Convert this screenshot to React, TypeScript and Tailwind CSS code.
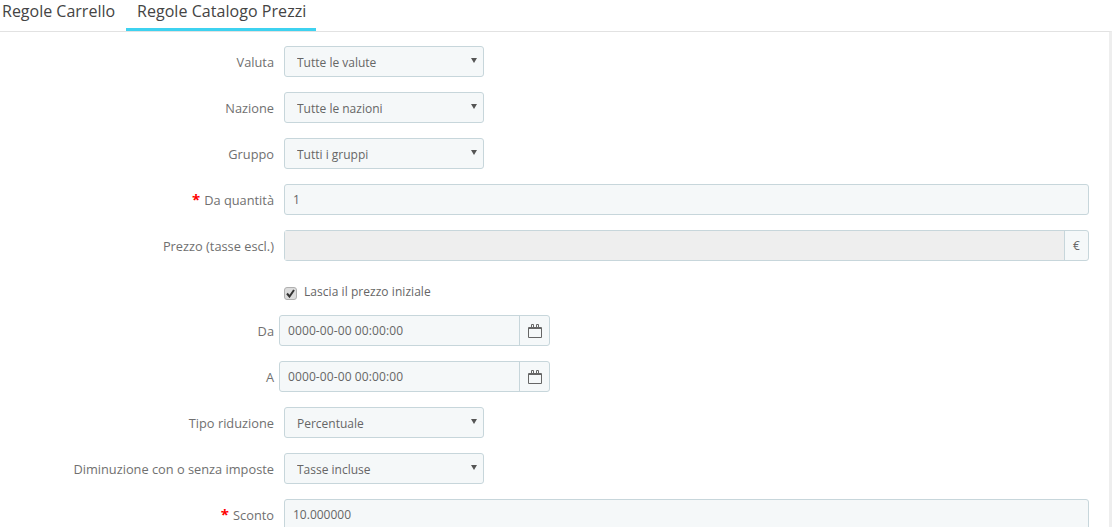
import type { ReactNode } from 'react'

const font = { fontFamily: '"Open Sans", sans-serif' }

function Label({ children, required, width = 'w-[274px]' }: { children: ReactNode; required?: boolean; width?: string }) {
  return (
    <label className={`${width} shrink-0 pt-[2px] text-right text-[12.8px] text-[#707070]`}>
      {required ? <span className="mr-[4px] text-[15px] font-bold leading-[12px] text-[#f00]">*</span> : null}
      {children}
    </label>
  )
}

function SelectRow({ label, value }: { label: string; value: string }) {
  return (
    <div className="flex items-center gap-[10px]">
      <Label>{label}</Label>
      <div className="relative h-[31px] w-[200px]">
        <select
          defaultValue={value}
          className="h-full w-full appearance-none rounded-[3px] border border-[#c7d6db] bg-[#f5f8f9] pl-[12px] pt-[2px] text-[12px] text-[#666] outline-none"
        >
          <option>{value}</option>
        </select>
        <span className="pointer-events-none absolute right-[7px] top-[12px] h-0 w-0 border-x-[3px] border-t-[5px] border-x-transparent border-t-[#555]" />
      </div>
    </div>
  )
}

function TextRow({ label, value, required }: { label: string; value: string; required?: boolean }) {
  return (
    <div className="flex items-center gap-[10px]">
      <Label required={required}>{label}</Label>
      <input
        readOnly
        value={value}
        className="h-[31px] w-[805px] rounded-[3px] border border-[#c7d6db] bg-[#f5f8f9] px-[8px] text-[12px] text-[#666] outline-none"
      />
    </div>
  )
}

function CalendarIcon() {
  return (
    <svg width="14" height="14" viewBox="0 0 14 14" fill="none" className="text-[#666]">
      <path d="M.5 3.5h13v10H.5z" stroke="currentColor" />
      <path d="M1 3h12v2H1z" fill="currentColor" />
      <path d="M3.5 3V.5h2V3M8.5 3V.5h2V3" stroke="currentColor" />
    </svg>
  )
}

function DateRow({ label, value }: { label: string; value: string }) {
  return (
    <div className="flex items-center gap-[5px]">
      <Label>{label}</Label>
      <div className="flex h-[31px] w-[271px] rounded-[3px] border border-[#c7d6db] bg-[#f5f8f9]">
        <input
          readOnly
          value={value}
          className="min-w-0 flex-1 bg-transparent px-[8px] text-[12px] tracking-[0.1px] text-[#666] outline-none"
        />
        <span className="flex w-[30px] items-center justify-center border-l border-[#c7d6db]">
          <CalendarIcon />
        </span>
      </div>
    </div>
  )
}

export default function App() {
  return (
    <div className="h-[527px] w-[1112px] overflow-hidden bg-white" style={font}>
      <div className="flex h-[31px] text-[16px] text-[#444]">
        <a className="w-[126px] pl-[2px] leading-[23px]">Regole Carrello</a>
        <a className="h-[31px] w-[190px] border-b-[3px] border-[#3ed2f0] pl-[11px] leading-[23px] tracking-[0.05px]">Regole Catalogo Prezzi</a>
      </div>
      <div className="h-full w-[1112px] border-r-[3px] border-t border-r-[#eee] border-t-[#e2e2e2] pt-[14px]">
        <div className="flex flex-col gap-[15px]">
          <SelectRow label="Valuta" value="Tutte le valute" />
          <SelectRow label="Nazione" value="Tutte le nazioni" />
          <SelectRow label="Gruppo" value="Tutti i gruppi" />
          <TextRow label="Da quantità" value="1" required />
          <div className="flex items-center gap-[10px]">
            <Label>Prezzo (tasse escl.)</Label>
            <div className="flex h-[31px] w-[805px] rounded-[3px] border border-[#c7d6db] bg-[#f5f8f9]">
              <div className="flex-1 bg-[#eee]" />
              <span className="flex w-[24px] items-center justify-center border-l border-[#c7d6db] text-[12px] text-[#666]">€</span>
            </div>
          </div>
          <div className="flex h-[24px] items-end gap-[7px] pl-[284px]">
            <span className="flex h-[13px] w-[13px] items-center justify-center rounded-[3px] border border-[#b0b0b0] bg-[#dcdcdc]">
              <svg width="9" height="9" viewBox="0 0 9 9">
                <path d="M1 4.5 3.5 7.5 8 1" fill="none" stroke="#333" strokeWidth="2" />
              </svg>
            </span>
            <span className="text-[12px] leading-[16px] tracking-[0.05px] text-[#666]">Lascia il prezzo iniziale</span>
          </div>
          <DateRow label="Da" value="0000-00-00 00:00:00" />
          <DateRow label="A" value="0000-00-00 00:00:00" />
          <SelectRow label="Tipo riduzione" value="Percentuale" />
          <SelectRow label="Diminuzione con o senza imposte" value="Tasse incluse" />
          <TextRow label="Sconto" value="10.000000" required />
        </div>
      </div>
    </div>
  )
}
